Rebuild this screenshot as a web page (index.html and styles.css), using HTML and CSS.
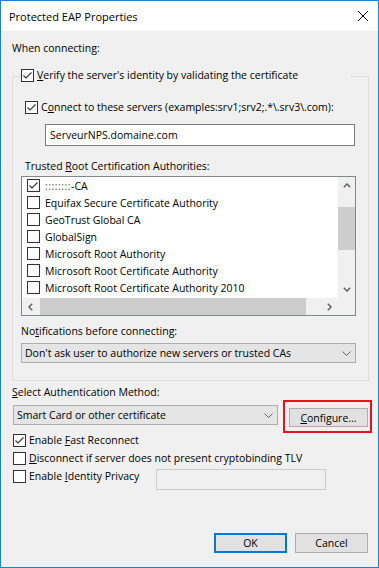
FILE: index.html
```html
<!DOCTYPE html>
<html>
<head>
<meta charset="utf-8">
<link rel="stylesheet" href="styles.css">
</head>
<body>
<div class="window">
  <div class="titlebar">
    <span class="title">Protected EAP Properties</span>
    <svg class="close" width="10" height="10" viewBox="0 0 10 10"><path d="M0 0 L10 10 M10 0 L0 10" stroke="#000" stroke-width="1" fill="none"/></svg>
  </div>
  <div class="content">
    <div class="label">When connecting:</div>
    <div class="group">
      <div class="legend">
        <span class="cb"><svg width="11" height="11" viewBox="0 0 11 11"><path d="M1.5 5.5 L4 8 L9.5 2.5" fill="none" stroke="#333" stroke-width="1.1"/></svg></span>
        <span><u>V</u>erify the server's identity by validating the certificate</span>
      </div>
      <div class="check-row connect">
        <span class="cb"><svg width="11" height="11" viewBox="0 0 11 11"><path d="M1.5 5.5 L4 8 L9.5 2.5" fill="none" stroke="#333" stroke-width="1.1"/></svg></span>
        <span>C<u>o</u>nnect to these servers (examples:srv1;srv2;.*\.srv3\.com):</span>
      </div>
      <div class="textbox servers">ServeurNPS.domaine.com</div>
      <div class="label trusted">Trusted <u>R</u>oot Certification Authorities:</div>
      <div class="listbox">
        <div class="list-main">
          <div class="list-items">
            <div class="item"><span class="cb"><svg width="11" height="11" viewBox="0 0 11 11"><path d="M1.5 5.5 L4 8 L9.5 2.5" fill="none" stroke="#333" stroke-width="1.1"/></svg></span><span><span class="masked">::::::::</span>-CA</span></div>
            <div class="item"><span class="cb"></span><span>Equifax Secure Certificate Authority</span></div>
            <div class="item"><span class="cb"></span><span>GeoTrust Global CA</span></div>
            <div class="item"><span class="cb"></span><span>GlobalSign</span></div>
            <div class="item"><span class="cb"></span><span>Microsoft Root Authority</span></div>
            <div class="item"><span class="cb"></span><span>Microsoft Root Certificate Authority</span></div>
            <div class="item"><span class="cb"></span><span>Microsoft Root Certificate Authority 2010</span></div>
          </div>
          <div class="vscroll">
            <div class="sb-btn"><svg width="8" height="5" viewBox="0 0 8 5"><path d="M0.8 4.2 L4 1 L7.2 4.2" stroke="#606060" stroke-width="1.5" fill="none"/></svg></div>
            <div class="vtrack"><div class="vthumb"></div></div>
            <div class="sb-btn"><svg width="8" height="5" viewBox="0 0 8 5"><path d="M0.8 0.8 L4 4 L7.2 0.8" stroke="#606060" stroke-width="1.5" fill="none"/></svg></div>
          </div>
        </div>
        <div class="hscroll-row">
          <div class="hscroll">
            <div class="sb-btn"><svg width="5" height="8" viewBox="0 0 5 8"><path d="M4.2 0.8 L1 4 L4.2 7.2" stroke="#606060" stroke-width="1.5" fill="none"/></svg></div>
            <div class="htrack"><div class="hthumb"></div></div>
            <div class="sb-btn"><svg width="5" height="8" viewBox="0 0 5 8"><path d="M0.8 0.8 L4 4 L0.8 7.2" stroke="#606060" stroke-width="1.5" fill="none"/></svg></div>
          </div>
          <div class="corner"></div>
        </div>
      </div>
      <div class="label notif">No<u>t</u>ifications before connecting:</div>
      <div class="combo notif-combo">
        <span>Don't ask user to authorize new servers or trusted CAs</span>
        <svg width="9" height="5" viewBox="0 0 9 5"><path d="M0.5 0.5 L4.5 4.5 L8.5 0.5" stroke="#606060" stroke-width="1" fill="none"/></svg>
      </div>
    </div>
    <div class="label select"><u>S</u>elect Authentication Method:</div>
    <div class="method-row">
      <div class="combo method-combo">
        <span>Smart Card or other certificate</span>
        <svg width="9" height="5" viewBox="0 0 9 5"><path d="M0.5 0.5 L4.5 4.5 L8.5 0.5" stroke="#606060" stroke-width="1" fill="none"/></svg>
      </div>
      <div class="highlight"><button class="btn configure"><u>C</u>onfigure...</button></div>
    </div>
    <div class="check-row fast">
      <span class="cb"><svg width="11" height="11" viewBox="0 0 11 11"><path d="M1.5 5.5 L4 8 L9.5 2.5" fill="none" stroke="#333" stroke-width="1.1"/></svg></span>
      <span>Enable <u>F</u>ast Reconnect</span>
    </div>
    <div class="check-row disc">
      <span class="cb"></span>
      <span><u>D</u>isconnect if server does not present cryptobinding TLV</span>
    </div>
    <div class="identity-row">
      <div class="check-row ident">
        <span class="cb"></span>
        <span class="ident-label">Enable <u>I</u>dentity Privacy</span>
      </div>
      <div class="textbox disabled"></div>
    </div>
    <div class="buttons">
      <button class="btn ok">OK</button>
      <button class="btn">Cancel</button>
    </div>
  </div>
</div>
</body>
</html>
```

FILE: styles.css
```css
html, body {
  margin: 0;
  padding: 0;
  background: #fff;
}
body {
  font-family: "Open Sans", "Noto Sans", sans-serif;
  font-size: 10.5px;
  color: #000;
}
u {
  text-decoration: underline;
  text-underline-offset: 1px;
}
.window {
  width: 379px;
  height: 568px;
  box-sizing: border-box;
  border: 1px solid #1883d7;
  display: flex;
  flex-direction: column;
  overflow: hidden;
}
.titlebar {
  height: 30px;
  flex: none;
  background: #fff;
  display: flex;
  align-items: center;
  justify-content: space-between;
  padding: 0 10px 0 8px;
}
.title {
  line-height: 15px;
  font-size: 11px;
}
.close {
  display: block;
  margin-top: -1px;
}
.content {
  flex: 1;
  background: #f0f0f0;
  display: flex;
  flex-direction: column;
  align-items: flex-start;
  padding: 10px 10px 14px 11px;
}
.label {
  height: 15px;
  line-height: 15px;
  white-space: nowrap;
}
.cb {
  width: 13px;
  height: 13px;
  box-sizing: border-box;
  border: 1px solid #333;
  background: #fff;
  flex: none;
  display: flex;
  align-items: center;
  justify-content: center;
}
.cb svg {
  display: block;
}
.check-row {
  height: 13px;
  line-height: 13px;
  display: flex;
  align-items: center;
  gap: 3px;
  white-space: nowrap;
}
.group {
  width: 357px;
  box-sizing: border-box;
  border: 1px solid #dcdcdc;
  margin-top: 20px;
  padding: 0 0 17px 0;
  display: flex;
  flex-direction: column;
  align-items: flex-start;
}
.legend {
  margin: -8px 0 0 8px;
  height: 13px;
  line-height: 13px;
  width: 330px;
  background: #f0f0f0;
  display: flex;
  align-items: center;
  gap: 3px;
  white-space: nowrap;
}
.connect {
  margin: 19px 0 0 12px;
}
.textbox {
  box-sizing: border-box;
  border: 1px solid #7a7a7a;
  background: #fff;
  padding-left: 4px;
}
.servers {
  margin: 10px 0 0 32px;
  width: 310px;
  height: 22px;
  line-height: 20px;
}
.trusted {
  margin: 13px 0 0 12px;
}
.listbox {
  margin: 2px 0 0 8px;
  width: 335px;
  height: 140px;
  box-sizing: border-box;
  border: 1px solid #828790;
  background: #fff;
  display: flex;
  flex-direction: column;
}
.list-main {
  flex: 1;
  display: flex;
  min-height: 0;
}
.list-items {
  flex: 1;
  overflow: hidden;
}
.item {
  height: 17px;
  display: flex;
  align-items: center;
  gap: 5px;
  padding-left: 5px;
  white-space: nowrap;
}
.masked {
  color: #555;
  letter-spacing: 0.5px;
}
.vscroll {
  width: 17px;
  background: #f0f0f0;
  display: flex;
  flex-direction: column;
}
.sb-btn {
  width: 17px;
  height: 17px;
  flex: none;
  display: flex;
  align-items: center;
  justify-content: center;
}
.vtrack {
  flex: 1;
  padding-top: 13px;
}
.vthumb {
  width: 17px;
  height: 43px;
  background: #cdcdcd;
}
.hscroll-row {
  height: 17px;
  flex: none;
  display: flex;
}
.hscroll {
  flex: 1;
  display: flex;
  background: #f0f0f0;
}
.htrack {
  flex: 1;
  padding-left: 1px;
}
.hthumb {
  width: 266px;
  height: 17px;
  background: #cdcdcd;
}
.corner {
  width: 17px;
  background: #f0f0f0;
}
.notif {
  margin: 8px 0 0 8px;
}
.combo {
  height: 20px;
  box-sizing: border-box;
  border: 1px solid #adadad;
  background: #e5e5e5;
  display: flex;
  align-items: center;
  justify-content: space-between;
  padding: 0 4px 0 3px;
  white-space: nowrap;
}
.combo svg {
  display: block;
}
.notif-combo {
  margin: 4px 0 0 8px;
  width: 335px;
}
.select {
  margin-top: 4px;
}
.method-row {
  display: flex;
  align-items: flex-start;
}
.method-combo {
  margin: 5px 0 0 1px;
  width: 265px;
}
.highlight {
  margin-left: 5px;
  border: 2px solid #e8141b;
  padding: 6px 2px 4px 4px;
}
.btn {
  font-family: inherit;
  font-size: 10.5px;
  color: #000;
  background: #e1e1e1;
  border: 1px solid #adadad;
  padding: 0;
  margin: 0;
  box-sizing: border-box;
  display: block;
}
.configure {
  width: 79px;
  height: 19px;
}
.fast {
  margin: 1px 0 0 1px;
}
.disc {
  margin: 5px 0 0 1px;
}
.identity-row {
  margin: 4px 0 0 1px;
  display: flex;
  align-items: flex-start;
}
.ident {
  margin-top: 1px;
}
.ident-label {
  width: 127px;
}
.textbox.disabled {
  width: 170px;
  height: 21px;
  border-color: #cccccc;
  background: #f0f0f0;
}
.buttons {
  margin-top: auto;
  align-self: stretch;
  display: flex;
  justify-content: flex-end;
  gap: 8px;
}
.buttons .btn {
  width: 73px;
  height: 20px;
}
.btn.ok {
  border: 2px solid #0078d7;
}
```
